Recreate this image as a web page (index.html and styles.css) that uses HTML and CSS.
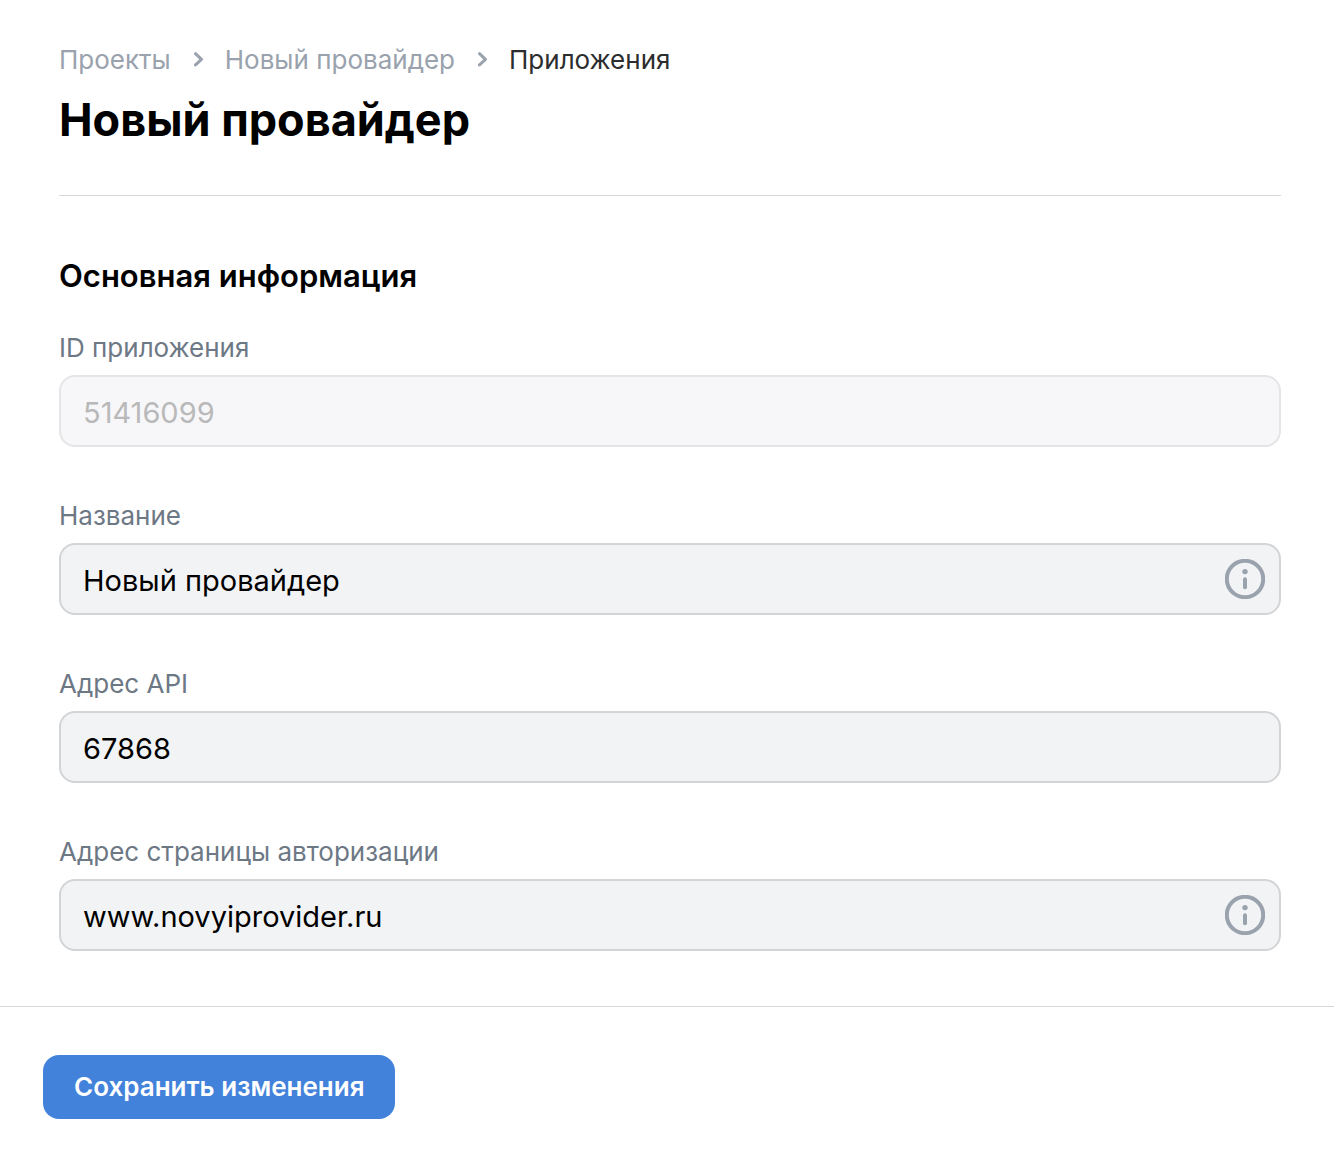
FILE: index.html
```html
<!DOCTYPE html>
<html lang="ru">
<head>
<meta charset="utf-8">
<meta name="viewport" content="width=device-width, initial-scale=1">
<title>Новый провайдер</title>
<link rel="stylesheet" href="styles.css">
</head>
<body>
<form class="page">
  <main class="content">
    <header class="header">
      <nav class="breadcrumbs" aria-label="Навигация">
        <a class="crumb" href="#projects">Проекты</a>
        <svg class="chevron" viewBox="0 0 12 16" aria-hidden="true"><path d="M3.5 1.7l6 5.6-6 5.6"/></svg>
        <a class="crumb" href="#provider">Новый провайдер</a>
        <svg class="chevron" viewBox="0 0 12 16" aria-hidden="true"><path d="M3.5 1.7l6 5.6-6 5.6"/></svg>
        <a class="crumb crumb-current" href="#apps" aria-current="page">Приложения</a>
      </nav>
      <h1 class="title">Новый провайдер</h1>
    </header>
    <section class="section">
      <h2 class="subtitle">Основная информация</h2>
      <div class="field">
        <label class="label" for="app-id">ID приложения</label>
        <div class="control control-disabled">
          <input class="input" id="app-id" type="text" value="51416099" disabled>
        </div>
      </div>
      <div class="field">
        <label class="label" for="name">Название</label>
        <div class="control">
          <input class="input" id="name" type="text" value="Новый провайдер">
          <button class="info" type="button" aria-label="Подсказка"><svg class="info-icon" viewBox="0 0 40 40" aria-hidden="true"><circle class="ring" cx="20" cy="20" r="18.2"/><circle cx="20" cy="12.6" r="2.7"/><rect x="18" y="18.3" width="4" height="12" rx="2"/></svg></button>
        </div>
      </div>
      <div class="field">
        <label class="label" for="api">Адрес API</label>
        <div class="control">
          <input class="input" id="api" type="text" value="67868">
        </div>
      </div>
      <div class="field">
        <label class="label" for="auth">Адрес страницы авторизации</label>
        <div class="control">
          <input class="input" id="auth" type="text" value="www.novyiprovider.ru">
          <button class="info" type="button" aria-label="Подсказка"><svg class="info-icon" viewBox="0 0 40 40" aria-hidden="true"><circle class="ring" cx="20" cy="20" r="18.2"/><circle cx="20" cy="12.6" r="2.7"/><rect x="18" y="18.3" width="4" height="12" rx="2"/></svg></button>
        </div>
      </div>
    </section>
  </main>
  <footer class="footer">
    <button class="save" type="submit">Сохранить изменения</button>
  </footer>
</form>
</body>
</html>
```

FILE: styles.css
```css
* {
  box-sizing: border-box;
}

body {
  margin: 0;
  background: #fff;
  color: #000;
  font-family: Inter, "Liberation Sans", sans-serif;
}

.content {
  padding: 44px 53px 55px 59px;
}

.header {
  padding-bottom: 47px;
  border-bottom: 1px solid #d7d8d9;
}

.breadcrumbs {
  display: flex;
  align-items: center;
  gap: 21px;
  font-size: 26px;
  line-height: 32px;
}

.crumb {
  color: #99a2ad;
  text-decoration: none;
}

.crumb-current {
  color: #2c2d2e;
}

.chevron {
  width: 12px;
  height: 16px;
  fill: none;
  stroke: #99a2ad;
  stroke-width: 3;
  stroke-linecap: round;
  stroke-linejoin: round;
}

.title {
  margin: 16px 0 0;
  font-size: 45px;
  line-height: 56px;
  font-weight: 700;
}

.section {
  padding-top: 60px;
}

.subtitle {
  margin: 0 0 36px;
  font-size: 31px;
  line-height: 40px;
  font-weight: 600;
}

.field + .field {
  margin-top: 53px;
}

.label {
  display: block;
  margin-bottom: 11px;
  color: #6d7885;
  font-size: 26px;
  line-height: 32px;
}

.control {
  display: flex;
  align-items: center;
  height: 72px;
  padding-right: 14px;
  border: 2px solid #d3d4d6;
  border-radius: 16px;
  background: #f2f3f5;
}

.control-disabled {
  border-color: #e4e5e6;
  background: #f7f7f9;
}

.input {
  flex: 1;
  min-width: 0;
  padding: 4px 22px 0;
  border: 0;
  outline: 0;
  background: transparent;
  color: #000;
  font: inherit;
  font-size: 29px;
  line-height: 40px;
}

.input:disabled {
  color: #b9b9ba;
}

.info {
  display: flex;
  padding: 0;
  border: 0;
  background: none;
}

.info-icon {
  width: 40px;
  height: 40px;
  fill: #99a2ad;
}

.ring {
  fill: none;
  stroke: #99a2ad;
  stroke-width: 4;
}

.footer {
  padding: 48px 43px 41px;
  border-top: 1px solid #d7d8d9;
}

.save {
  height: 64px;
  padding: 0 31px 2px;
  border: 0;
  border-radius: 16px;
  background: #4282db;
  color: #fff;
  font: inherit;
  font-size: 26px;
  font-weight: 600;
}
```
